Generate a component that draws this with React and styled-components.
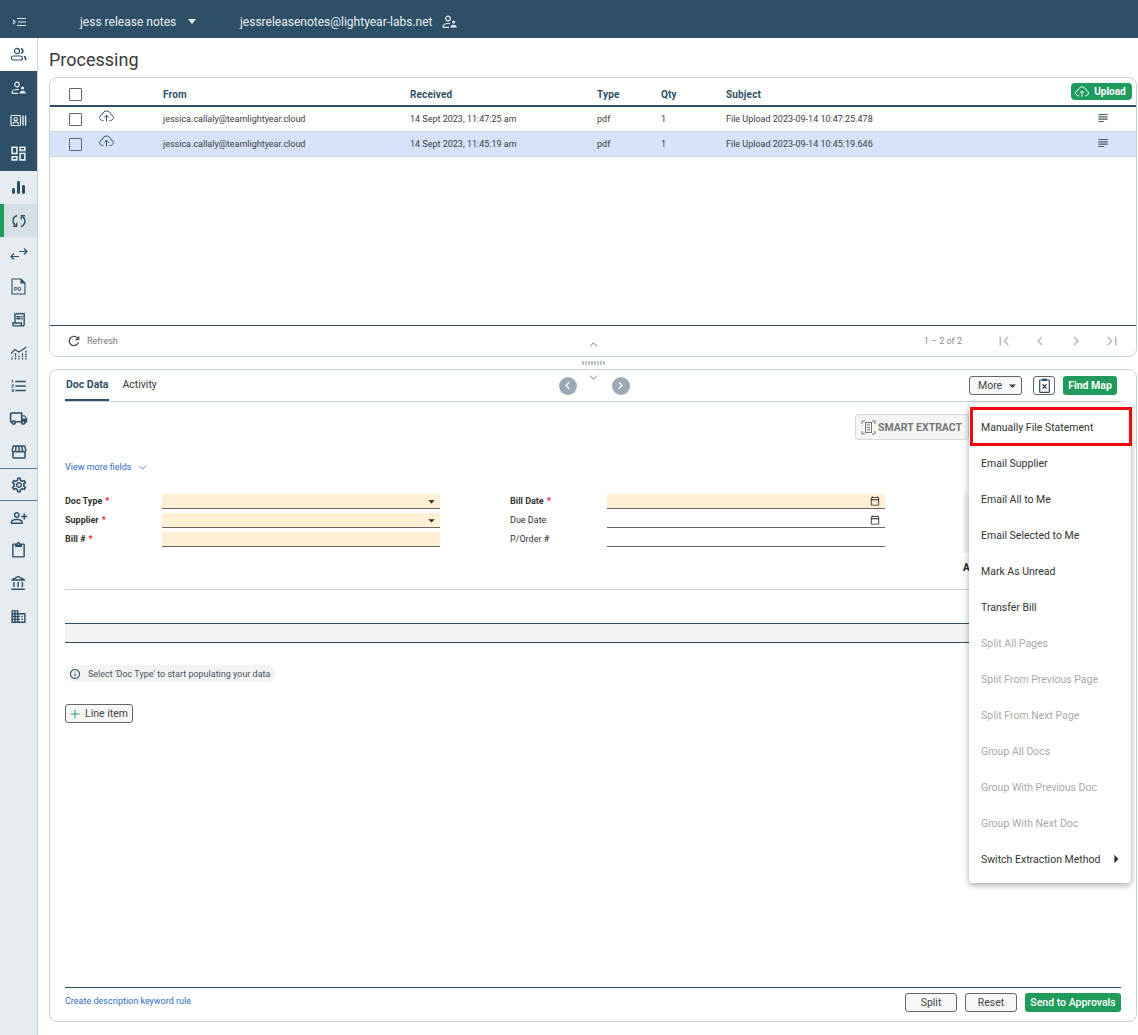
import React from "react";
import styled, { createGlobalStyle } from "styled-components";
import { ChevronUp, ChevronDown, Plus } from "lucide-react";
import {
  MdOutlineDashboard,
  MdOutlineReceiptLong,
  MdOutlineFormatListNumbered,
  MdOutlineLocalShipping,
  MdOutlineStorefront,
  MdOutlineSettings,
  MdOutlinePersonAddAlt,
  MdOutlineContentPaste,
  MdOutlineAccountBalance,
  MdDomain,
  MdOutlineSubject,
  MdRefresh,
  MdFirstPage,
  MdLastPage,
  MdChevronLeft,
  MdChevronRight,
  MdOutlineInfo,
  MdOutlineCalendarToday,
  MdArrowDropDown,
  MdArrowRight,
} from "react-icons/md";

const navy = "#2d5068";
const green = "#1f9b5c";

const GlobalStyle = createGlobalStyle`
  html, body {
    margin: 0;
    padding: 0;
    height: 100%;
    background: #fff;
    overflow: hidden;
    font-family: Roboto, "Liberation Sans", sans-serif;
    color: #333;
  }
`;

const Page = styled.div`
  display: flex;
  flex-direction: column;
  height: 1035px;
`;

const Header = styled.header`
  display: flex;
  align-items: center;
  height: 38px;
  box-sizing: border-box;
  padding-top: 5px;
  flex-shrink: 0;
  background: ${navy};
  color: #e9eef1;
  font-size: 12px;
`;

const HeaderToggle = styled.div`
  display: flex;
  justify-content: center;
  width: 38px;
`;

const AccountName = styled.div`
  display: flex;
  align-items: center;
  margin-left: 42px;
  width: 160px;
  gap: 12px;
`;

const Caret = styled.span`
  width: 0;
  height: 0;
  border-left: 4px solid transparent;
  border-right: 4px solid transparent;
  border-top: 5px solid #e9eef1;
`;

const AccountEmail = styled.div`
  display: flex;
  align-items: center;
  gap: 10px;
`;

const Body = styled.div`
  display: flex;
  flex: 1;
  min-height: 0;
`;

const Sidebar = styled.nav`
  width: 37px;
  flex-shrink: 0;
  background: #e6ecef;
  border-right: 1px solid #c9d3d7;
`;

const NavGroup = styled.div`
  background: ${navy};
  padding-bottom: 1px;
`;

const NavItem = styled.div`
  display: flex;
  align-items: center;
  justify-content: center;
  height: 33px;
  box-sizing: border-box;
  color: ${(p) => (p.$dark ? "#e6ecef" : navy)};
  background: ${(p) => (p.$white ? "#fff" : p.$active ? "#d6e0e4" : "transparent")};
  border-left: ${(p) => (p.$active ? `4px solid ${green}` : "none")};
  padding-right: ${(p) => (p.$active ? "4px" : "0")};
  border-top: ${(p) => (p.$ruled ? "1px solid #5b7486" : "none")};
  border-bottom: ${(p) => (p.$ruled ? "1px solid #5b7486" : "none")};
`;

const Main = styled.main`
  flex: 1;
  min-width: 0;
  display: flex;
  flex-direction: column;
  padding: 0 1px 13px 11px;
`;

const Title = styled.h1`
  margin: 0;
  height: 35px;
  padding-top: 4px;
  display: flex;
  align-items: center;
  font-size: 18px;
  font-weight: 400;
  color: #3a3a3a;
`;

const Panel = styled.section`
  border: 1px solid #c6d2d5;
  border-radius: 8px;
  background: #fff;
  position: relative;
`;

const ListPanel = styled(Panel)`
  height: 280px;
  box-sizing: border-box;
  display: flex;
  flex-direction: column;
  flex-shrink: 0;
`;

const TableRow = styled.div`
  display: grid;
  grid-template-columns: 30px 64px 247px 187px 64px 65px 1fr;
  align-items: center;
  padding-left: 19px;
  padding-top: ${(p) => (p.$head ? "5px" : "0")};
  height: ${(p) => (p.$head ? "29px" : "25px")};
  box-sizing: border-box;
  position: relative;
  border-bottom: ${(p) => (p.$head ? `2px solid ${navy}` : "1px solid #cfd8dc")};
  background: ${(p) => (p.$selected ? "#d6e3fb" : "transparent")};
  font-size: 9px;
  color: #3d3d3d;
`;

const HeadCell = styled.div`
  font-size: 10px;
  font-weight: 700;
  color: ${navy};
  letter-spacing: 0.15px;
`;

const Checkbox = styled.span`
  display: block;
  width: 11px;
  height: 11px;
  border: 1px solid #666;
  border-radius: 1px;
  background: ${(p) => (p.$tint ? "transparent" : "#fff")};
`;

const RowIcon = styled.span`
  display: flex;
  transform: translateY(-3px);
`;

const RowAction = styled.span`
  position: absolute;
  left: 1046px;
  top: 4px;
  display: flex;
  color: #4a5c68;
`;

const UploadButton = styled.button`
  position: absolute;
  right: 4px;
  top: 5px;
  width: 61px;
  height: 17px;
  border: 0;
  border-radius: 4px;
  background: ${green};
  color: #fff;
  font: 700 10px Roboto, sans-serif;
  display: flex;
  align-items: center;
  justify-content: center;
  gap: 5px;
  padding: 0 2px 0 0;
`;

const TableFill = styled.div`
  flex: 1;
  border-bottom: 1px solid ${navy};
`;

const ListFooter = styled.div`
  display: flex;
  align-items: center;
  height: 30px;
  padding: 0 15px 0 16px;
  color: #777;
  font-size: 9px;
`;

const RefreshLabel = styled.div`
  display: flex;
  align-items: center;
  gap: 5px;
  flex: 1;
`;

const PageLabel = styled.span`
  margin-right: 33px;
  color: #8d8d8d;
`;

const PagerIcons = styled.div`
  display: flex;
  align-items: center;
  gap: 18px;
  color: #b9b9b9;
`;

const Splitter = styled.div`
  height: 12px;
  flex-shrink: 0;
  position: relative;
`;

const SplitChevron = styled.span`
  position: absolute;
  left: 538px;
  top: ${(p) => p.$top}px;
  display: flex;
  color: #555;
  z-index: 2;
`;

const SplitDots = styled.span`
  position: absolute;
  left: 533px;
  top: 4px;
  width: 23px;
  height: 4px;
  background: repeating-linear-gradient(90deg, #b9c3c9 0 1.5px, transparent 1.5px 3px);
`;

const DocPanel = styled(Panel)`
  flex: 1;
  display: flex;
  flex-direction: column;
  padding: 0 15px 9px 15px;
  min-height: 0;
`;

const DocTop = styled.div`
  display: grid;
  grid-template-columns: 1fr auto 1fr;
  align-items: center;
  height: 32px;
  box-sizing: border-box;
  border-bottom: 1px solid #c6d2d5;
  flex-shrink: 0;
`;

const Tabs = styled.div`
  display: flex;
  align-self: stretch;
  gap: 12px;
`;

const Tab = styled.div`
  display: flex;
  align-items: center;
  height: 31px;
  box-sizing: border-box;
  padding: 0 1px;
  font-size: 10.5px;
  font-weight: ${(p) => (p.$active ? 700 : 400)};
  color: ${(p) => (p.$active ? navy : "#333")};
  border-bottom: ${(p) => (p.$active ? `2px solid ${navy}` : "2px solid transparent")};
  margin-bottom: -1px;
`;

const DocNav = styled.div`
  display: flex;
  gap: 35px;
  transform: translateX(1px);
`;

const RoundNav = styled.span`
  display: flex;
  align-items: center;
  justify-content: center;
  width: 18px;
  height: 18px;
  border-radius: 50%;
  background: #9aa9b5;
  color: #fff;
`;

const DocActions = styled.div`
  display: flex;
  justify-content: flex-end;
  align-items: center;
  gap: 8px;
  padding-right: 4px;
`;

const OutlineButton = styled.button`
  display: inline-flex;
  align-items: center;
  justify-content: center;
  gap: ${(p) => p.$gap || 0}px;
  width: ${(p) => p.$w}px;
  height: 19px;
  padding: 0;
  box-sizing: border-box;
  background: ${(p) => p.$fill || "#fff"};
  border: 1px solid #666;
  border-radius: 3px;
  color: #444;
  font: 400 10.5px Roboto, sans-serif;
`;

const MoreButton = styled(OutlineButton)`
  justify-content: flex-start;
  padding-left: 8px;
  margin-right: 3px;
`;

const GreenButton = styled.button`
  width: ${(p) => p.$w}px;
  height: 19px;
  padding: 0;
  border: 0;
  border-radius: 3px;
  background: ${green};
  color: #fff;
  font: ${(p) => p.$weight || 700} 10.5px Roboto, sans-serif;
`;

const SmartRow = styled.div`
  display: flex;
  justify-content: flex-end;
  padding: 12px 152px 0 0;
`;

const SmartButton = styled.div`
  display: flex;
  align-items: center;
  gap: 2px;
  width: 114px;
  height: 26px;
  box-sizing: border-box;
  padding-left: 5px;
  background: #f4f4f4;
  border: 1px solid #d8d8d8;
  border-radius: 3px;
  color: #777;
  font-size: 10.5px;
  font-weight: 700;
  white-space: nowrap;
`;

const MoreFields = styled.div`
  display: flex;
  align-items: center;
  gap: 5px;
  height: 14px;
  margin-top: 20px;
  color: #2f6bc4;
  font-size: 9px;
`;

const FormArea = styled.div`
  display: flex;
  margin-top: 20px;
`;

const FormGrid = styled.div`
  display: grid;
  grid-template-columns: 97px 278px 70px 97px 278px;
  grid-auto-rows: 15px;
  row-gap: 4px;
  align-content: start;
`;

const FieldLabel = styled.label`
  font-size: 9px;
  font-weight: ${(p) => (p.$required ? 700 : 400)};
  color: #333;
  display: flex;
  align-items: center;
  gap: 3px;
  padding-bottom: 2px;
`;

const Star = styled.span`
  color: #e0202a;
`;

const Field = styled.div`
  display: flex;
  align-items: center;
  justify-content: flex-end;
  padding-right: 5px;
  background: ${(p) => (p.$required ? "#fff0d3" : "#fff")};
  border-bottom: 1px solid #666;
  color: #222;
`;

const FieldCaret = styled(MdArrowDropDown)`
  margin-right: -3.5px;
`;

const TotalsColumn = styled.div`
  margin-left: 78px;
  width: 130px;
`;

const TotalsBox = styled.div`
  height: 59px;
  background: #f3f3f3;
  border-radius: 3px;
`;

const TotalsLabel = styled.div`
  margin-top: 9px;
  height: 12px;
  font-size: 10px;
  font-weight: 700;
  color: #222;
`;

const Divider = styled.div`
  height: 1px;
  margin-top: 15px;
  background: #c6d2d5;
`;

const LinesHead = styled.div`
  height: 18px;
  margin-top: 33px;
  background: #f3f3f3;
  border-top: 1px solid ${navy};
  border-bottom: 1px solid ${navy};
`;

const InfoPill = styled.div`
  display: flex;
  align-items: center;
  gap: 7px;
  align-self: flex-start;
  height: 17px;
  margin-top: 22px;
  padding: 0 6px 0 4px;
  background: #f3f3f3;
  border-radius: 9px;
  color: #45535e;
  font-size: 9px;
`;

const InfoIcon = styled.span`
  display: flex;
  color: ${navy};
`;

const LineItemButton = styled(OutlineButton)`
  align-self: flex-start;
  justify-content: flex-start;
  margin-top: 22px;
  padding-left: 2px;
  gap: 3px;
  background: #f7f7f7;
`;

const PlusIcon = styled.span`
  display: flex;
  color: ${green};
`;

const DocFooter = styled.div`
  margin-top: auto;
  display: flex;
  align-items: center;
  justify-content: space-between;
  border-top: 1px solid ${navy};
  padding-top: 5px;
`;

const RuleLink = styled.a`
  color: #2f6bc4;
  font-size: 9px;
  padding-bottom: 4px;
`;

const FooterButtons = styled.div`
  display: flex;
  gap: 8px;
`;

const Menu = styled.div`
  position: absolute;
  right: 5px;
  top: 33px;
  width: 162px;
  padding: 6px 0;
  background: #fff;
  border-radius: 4px;
  box-shadow: 0 2px 6px rgba(0, 0, 0, 0.35);
  z-index: 5;
`;

const MenuItem = styled.div`
  position: relative;
  display: flex;
  align-items: center;
  justify-content: space-between;
  height: 36px;
  padding: 0 10px 0 12px;
  font-size: 10.5px;
  color: ${(p) => (p.$disabled ? "#a9a9a9" : "#333")};

  ${(p) =>
    p.$highlight &&
    `&::after {
      content: "";
      position: absolute;
      inset: -2px -1px -1px 1px;
      border: 3px solid #f00a10;
    }`}
`;

const SubCaret = styled.span`
  display: flex;
  color: #333;
  margin-right: -5px;
`;

const MenuToggleIcon = () => (
  <svg width="14" height="10" viewBox="0 0 14 10" fill="none" stroke="#e9eef1" strokeWidth="1.2">
    <path d="M1 3l2 2-2 2M5 1.5h9M6 5h8M5 8.5h9" />
  </svg>
);

// person with a smaller solid one beside it, used in the header and sidebar
const PersonPair = ({ color }) => (
  <svg width="16" height="14" viewBox="0 0 16 14" fill="none" stroke={color} strokeWidth="1.2">
    <circle cx="6" cy="3.5" r="2.3" />
    <path d="M1 12.2v-.7c0-2 2.6-3 5-3 .7 0 1.2.1 1.8.2M1 12.4h6" />
    <circle cx="11.6" cy="7" r="1.5" fill={color} stroke="none" />
    <path d="M8.4 12.6c0-1.9 1.6-2.8 3.2-2.8s3.2.9 3.2 2.8z" fill={color} stroke="none" />
  </svg>
);

const PeopleIcon = ({ color }) => (
  <svg width="17" height="15" viewBox="0 0 17 15" fill="none" stroke={color} strokeWidth="1.2">
    <circle cx="7" cy="4" r="2.6" />
    <path d="M11 1.6c1.4.5 1.9 1.5 1.9 2.4s-.5 1.9-1.9 2.4" strokeWidth="1.6" />
    <rect x="1.4" y="9" width="11" height="4" rx="2" />
    <path d="M14 9.2c1 .6 1.6 1.3 1.6 2.4 0 .6-.2 1.1-.6 1.4" strokeWidth="1.6" />
  </svg>
);

const ContactIcon = ({ color }) => (
  <svg width="17" height="13" viewBox="0 0 17 13" fill="none" stroke={color} strokeWidth="1.2">
    <rect x="1" y="1.5" width="9.5" height="10" rx="1" />
    <circle cx="5.7" cy="5.2" r="1.7" />
    <path d="M2.6 10c.4-1.6 1.8-2 3.1-2s2.7.4 3.1 2" />
    <path d="M13 1.5v10M15.6 1.5v10" strokeWidth="1.4" />
  </svg>
);

const BarsIcon = () => (
  <svg width="15" height="15" viewBox="0 0 15 15" fill={navy}>
    <rect x="1" y="8" width="3" height="6" rx="1.4" />
    <rect x="6" y="1" width="3" height="13" rx="1.4" />
    <rect x="11" y="5" width="3" height="9" rx="1.4" />
  </svg>
);

const SyncIcon = () => (
  <svg width="16" height="16" viewBox="0 0 16 16" fill="none" stroke={navy} strokeWidth="1.4">
    <path d="M6 2.5C3.2 3.5 2 5.8 2 8c0 1.9.9 3.4 2.4 4.4" />
    <path d="M2 13.2h3.6V9.8" />
    <path d="M10 13.5c2.8-1 4-3.3 4-5.5 0-1.9-.9-3.4-2.4-4.4" />
    <path d="M14 2.8h-3.6v3.4" />
  </svg>
);

const TransferIcon = () => (
  <svg width="18" height="14" viewBox="0 0 18 14" fill="none" stroke={navy} strokeWidth="1.2">
    <path d="M1 9.5h8M4 6.5l-3 3 3 3" />
    <path d="M9 4.5h8M14 1.5l3 3-3 3" />
  </svg>
);

const GrowthIcon = () => (
  <svg width="18" height="14" viewBox="0 0 18 14" fill="none" stroke={navy} strokeWidth="1.1">
    <path d="M1 7.5l4-4 4 2.5 7.5-5" />
    <path d="M2 13.5v-3M5.5 13.5V7M9 13.5V9M12.5 13.5V6.5M16 13.5V4" strokeWidth="1.3" strokeDasharray="1.6 .7" />
  </svg>
);

const PoFileIcon = ({ color }) => (
  <svg width="15" height="17" viewBox="0 0 15 17" fill="none" stroke={color} strokeWidth="1.1">
    <path d="M1 1h9l4 4v11H1z" />
    <path d="M10 1v4h4" fill={color} />
    <text x="3" y="12.6" fontSize="5.5" fontWeight="700" fontFamily="Roboto" fill={color} stroke="none">
      PO
    </text>
  </svg>
);

const ClipboardX = () => (
  <svg width="11" height="15" viewBox="0 0 11 15" fill="none">
    <rect x="0.7" y="2" width="9.6" height="12.3" rx="0.6" stroke={navy} strokeWidth="1.2" />
    <rect x="3" y="0.6" width="5" height="2.4" fill={navy} />
    <path d="M3.6 6.4l3.8 4.2M7.4 6.4l-3.8 4.2" stroke="#222" strokeWidth="1.1" />
  </svg>
);

const ExtractIcon = () => (
  <svg width="15" height="15" viewBox="0 0 15 15" fill="none" stroke="#777" strokeWidth="1">
    <path d="M1 4V1h3M11 1h3v3M14 11v3h-3M4 14H1v-3" />
    <rect x="4.5" y="2.5" width="6" height="10" />
    <path d="M6 5h3M6 7.5h3M6 10h3" />
  </svg>
);

const CloudIcon = ({ color, width = 15 }) => (
  <svg width={width} height={(width * 11.5) / 15} viewBox="0 0 15 11.5" fill="none" stroke={color} strokeWidth="1">
    <path d="M4.5 10.5H3.6C2 10.5.6 9.2.6 7.6c0-1.5 1.1-2.7 2.6-2.9C3.8 2.4 5.5 1 7.5 1c2.4 0 4.3 1.7 4.6 3.8 1.3.1 2.3 1.3 2.3 2.7 0 1.6-1.3 3-2.9 3h-1" />
    <path d="M7.5 11.5V5.2M5.2 7.5l2.3-2.3 2.3 2.3" />
  </svg>
);

const navDark = [
  <PersonPair color="#e6ecef" />,
  <ContactIcon color="#e6ecef" />,
  <MdOutlineDashboard size={19} />,
];
const navMiddle = [
  { icon: <BarsIcon /> },
  { icon: <SyncIcon />, active: true },
  { icon: <TransferIcon /> },
  { icon: <PoFileIcon color={navy} /> },
  { icon: <MdOutlineReceiptLong size={17} /> },
  { icon: <GrowthIcon /> },
  { icon: <MdOutlineFormatListNumbered size={18} /> },
  { icon: <MdOutlineLocalShipping size={19} /> },
  { icon: <MdOutlineStorefront size={18} /> },
  { icon: <MdOutlineSettings size={18} />, ruled: true },
  { icon: <MdOutlinePersonAddAlt size={18} /> },
  { icon: <MdOutlineContentPaste size={17} /> },
  { icon: <MdOutlineAccountBalance size={17} /> },
  { icon: <MdDomain size={17} /> },
];

const rows = [
  { time: "14 Sept 2023, 11:47:25 am", subject: "File Upload 2023-09-14 10:47:25.478" },
  { time: "14 Sept 2023, 11:45:19 am", subject: "File Upload 2023-09-14 10:45:19.646", selected: true },
];

const menuItems = [
  { label: "Manually File Statement", highlight: true },
  { label: "Email Supplier" },
  { label: "Email All to Me" },
  { label: "Email Selected to Me" },
  { label: "Mark As Unread" },
  { label: "Transfer Bill" },
  { label: "Split All Pages", disabled: true },
  { label: "Split From Previous Page", disabled: true },
  { label: "Split From Next Page", disabled: true },
  { label: "Group All Docs", disabled: true },
  { label: "Group With Previous Doc", disabled: true },
  { label: "Group With Next Doc", disabled: true },
  { label: "Switch Extraction Method", submenu: true },
];

const App = () => {
  return (
    <Page>
      <GlobalStyle />
      <Header>
        <HeaderToggle>
          <MenuToggleIcon />
        </HeaderToggle>
        <AccountName>
          jess release notes
          <Caret />
        </AccountName>
        <AccountEmail>
          jessreleasenotes@lightyear-labs.net
          <PersonPair color="#e9eef1" />
        </AccountEmail>
      </Header>
      <Body>
        <Sidebar>
          <NavItem $white>
            <PeopleIcon color={navy} />
          </NavItem>
          <NavGroup>
            {navDark.map((icon, i) => (
              <NavItem key={i} $dark>
                {icon}
              </NavItem>
            ))}
          </NavGroup>
          {navMiddle.map((item, i) => (
            <NavItem key={i} $active={item.active} $ruled={item.ruled}>
              {item.icon}
            </NavItem>
          ))}
        </Sidebar>
        <Main>
          <Title>Processing</Title>
          <ListPanel>
            <TableRow $head>
              <Checkbox />
              <span />
              <HeadCell>From</HeadCell>
              <HeadCell>Received</HeadCell>
              <HeadCell>Type</HeadCell>
              <HeadCell>Qty</HeadCell>
              <HeadCell>Subject</HeadCell>
              <UploadButton>
                <CloudIcon color="#fff" width={14} />
                Upload
              </UploadButton>
            </TableRow>
            {rows.map((row) => (
              <TableRow key={row.time} $selected={row.selected}>
                <Checkbox $tint={row.selected} />
                <RowIcon>
                  <CloudIcon color={navy} />
                </RowIcon>
                <span>jessica.callaly@teamlightyear.cloud</span>
                <span>{row.time}</span>
                <span>pdf</span>
                <span>1</span>
                <span>{row.subject}</span>
                <RowAction>
                  <MdOutlineSubject size={14} />
                </RowAction>
              </TableRow>
            ))}
            <TableFill />
            <ListFooter>
              <RefreshLabel>
                <MdRefresh size={16} color="#555" />
                Refresh
              </RefreshLabel>
              <PageLabel>1 – 2 of 2</PageLabel>
              <PagerIcons>
                <MdFirstPage size={18} />
                <MdChevronLeft size={18} />
                <MdChevronRight size={18} />
                <MdLastPage size={18} />
              </PagerIcons>
            </ListFooter>
          </ListPanel>
          <Splitter>
            <SplitChevron $top={-19}>
              <ChevronUp size={13} strokeWidth={1.5} />
            </SplitChevron>
            <SplitDots />
            <SplitChevron $top={14}>
              <ChevronDown size={13} strokeWidth={1.5} />
            </SplitChevron>
          </Splitter>
          <DocPanel>
            <DocTop>
              <Tabs>
                <Tab $active>Doc Data</Tab>
                <Tab>Activity</Tab>
              </Tabs>
              <DocNav>
                <RoundNav>
                  <MdChevronLeft size={15} />
                </RoundNav>
                <RoundNav>
                  <MdChevronRight size={15} />
                </RoundNav>
              </DocNav>
              <DocActions>
                <MoreButton $w={53} $fill="#f7f7f7" $gap={2}>
                  More
                  <MdArrowDropDown size={18} />
                </MoreButton>
                <OutlineButton $w={22}>
                  <ClipboardX />
                </OutlineButton>
                <GreenButton $w={54}>Find Map</GreenButton>
              </DocActions>
            </DocTop>
            <SmartRow>
              <SmartButton>
                <ExtractIcon />
                SMART EXTRACT
              </SmartButton>
            </SmartRow>
            <MoreFields>
              View more fields
              <ChevronDown size={13} strokeWidth={1.5} />
            </MoreFields>
            <FormArea>
              <FormGrid>
                <FieldLabel $required>
                  Doc Type <Star>*</Star>
                </FieldLabel>
                <Field $required>
                  <FieldCaret size={15} />
                </Field>
                <span />
                <FieldLabel $required>
                  Bill Date <Star>*</Star>
                </FieldLabel>
                <Field $required>
                  <MdOutlineCalendarToday size={10} />
                </Field>
                <FieldLabel $required>
                  Supplier <Star>*</Star>
                </FieldLabel>
                <Field $required>
                  <FieldCaret size={15} />
                </Field>
                <span />
                <FieldLabel>Due Date</FieldLabel>
                <Field>
                  <MdOutlineCalendarToday size={10} />
                </Field>
                <FieldLabel $required>
                  Bill # <Star>*</Star>
                </FieldLabel>
                <Field $required />
                <span />
                <FieldLabel>P/Order #</FieldLabel>
                <Field />
              </FormGrid>
              <TotalsColumn>
                <TotalsBox />
                <TotalsLabel>A</TotalsLabel>
              </TotalsColumn>
            </FormArea>
            <Divider />
            <LinesHead />
            <InfoPill>
              <InfoIcon>
                <MdOutlineInfo size={12} />
              </InfoIcon>
              Select 'Doc Type' to start populating your data
            </InfoPill>
            <LineItemButton $w={68}>
              <PlusIcon>
                <Plus size={14} strokeWidth={1.6} />
              </PlusIcon>
              Line item
            </LineItemButton>
            <DocFooter>
              <RuleLink>Create description keyword rule</RuleLink>
              <FooterButtons>
                <OutlineButton $w={52} $fill="#f7f7f7">
                  Split
                </OutlineButton>
                <OutlineButton $w={52} $fill="#f7f7f7">
                  Reset
                </OutlineButton>
                <GreenButton $w={96} $weight={500}>
                  Send to Approvals
                </GreenButton>
              </FooterButtons>
            </DocFooter>
            <Menu>
              {menuItems.map((item) => (
                <MenuItem key={item.label} $disabled={item.disabled} $highlight={item.highlight}>
                  {item.label}
                  {item.submenu && (
                    <SubCaret>
                      <MdArrowRight size={20} />
                    </SubCaret>
                  )}
                </MenuItem>
              ))}
            </Menu>
          </DocPanel>
        </Main>
      </Body>
    </Page>
  );
};

export default App;
